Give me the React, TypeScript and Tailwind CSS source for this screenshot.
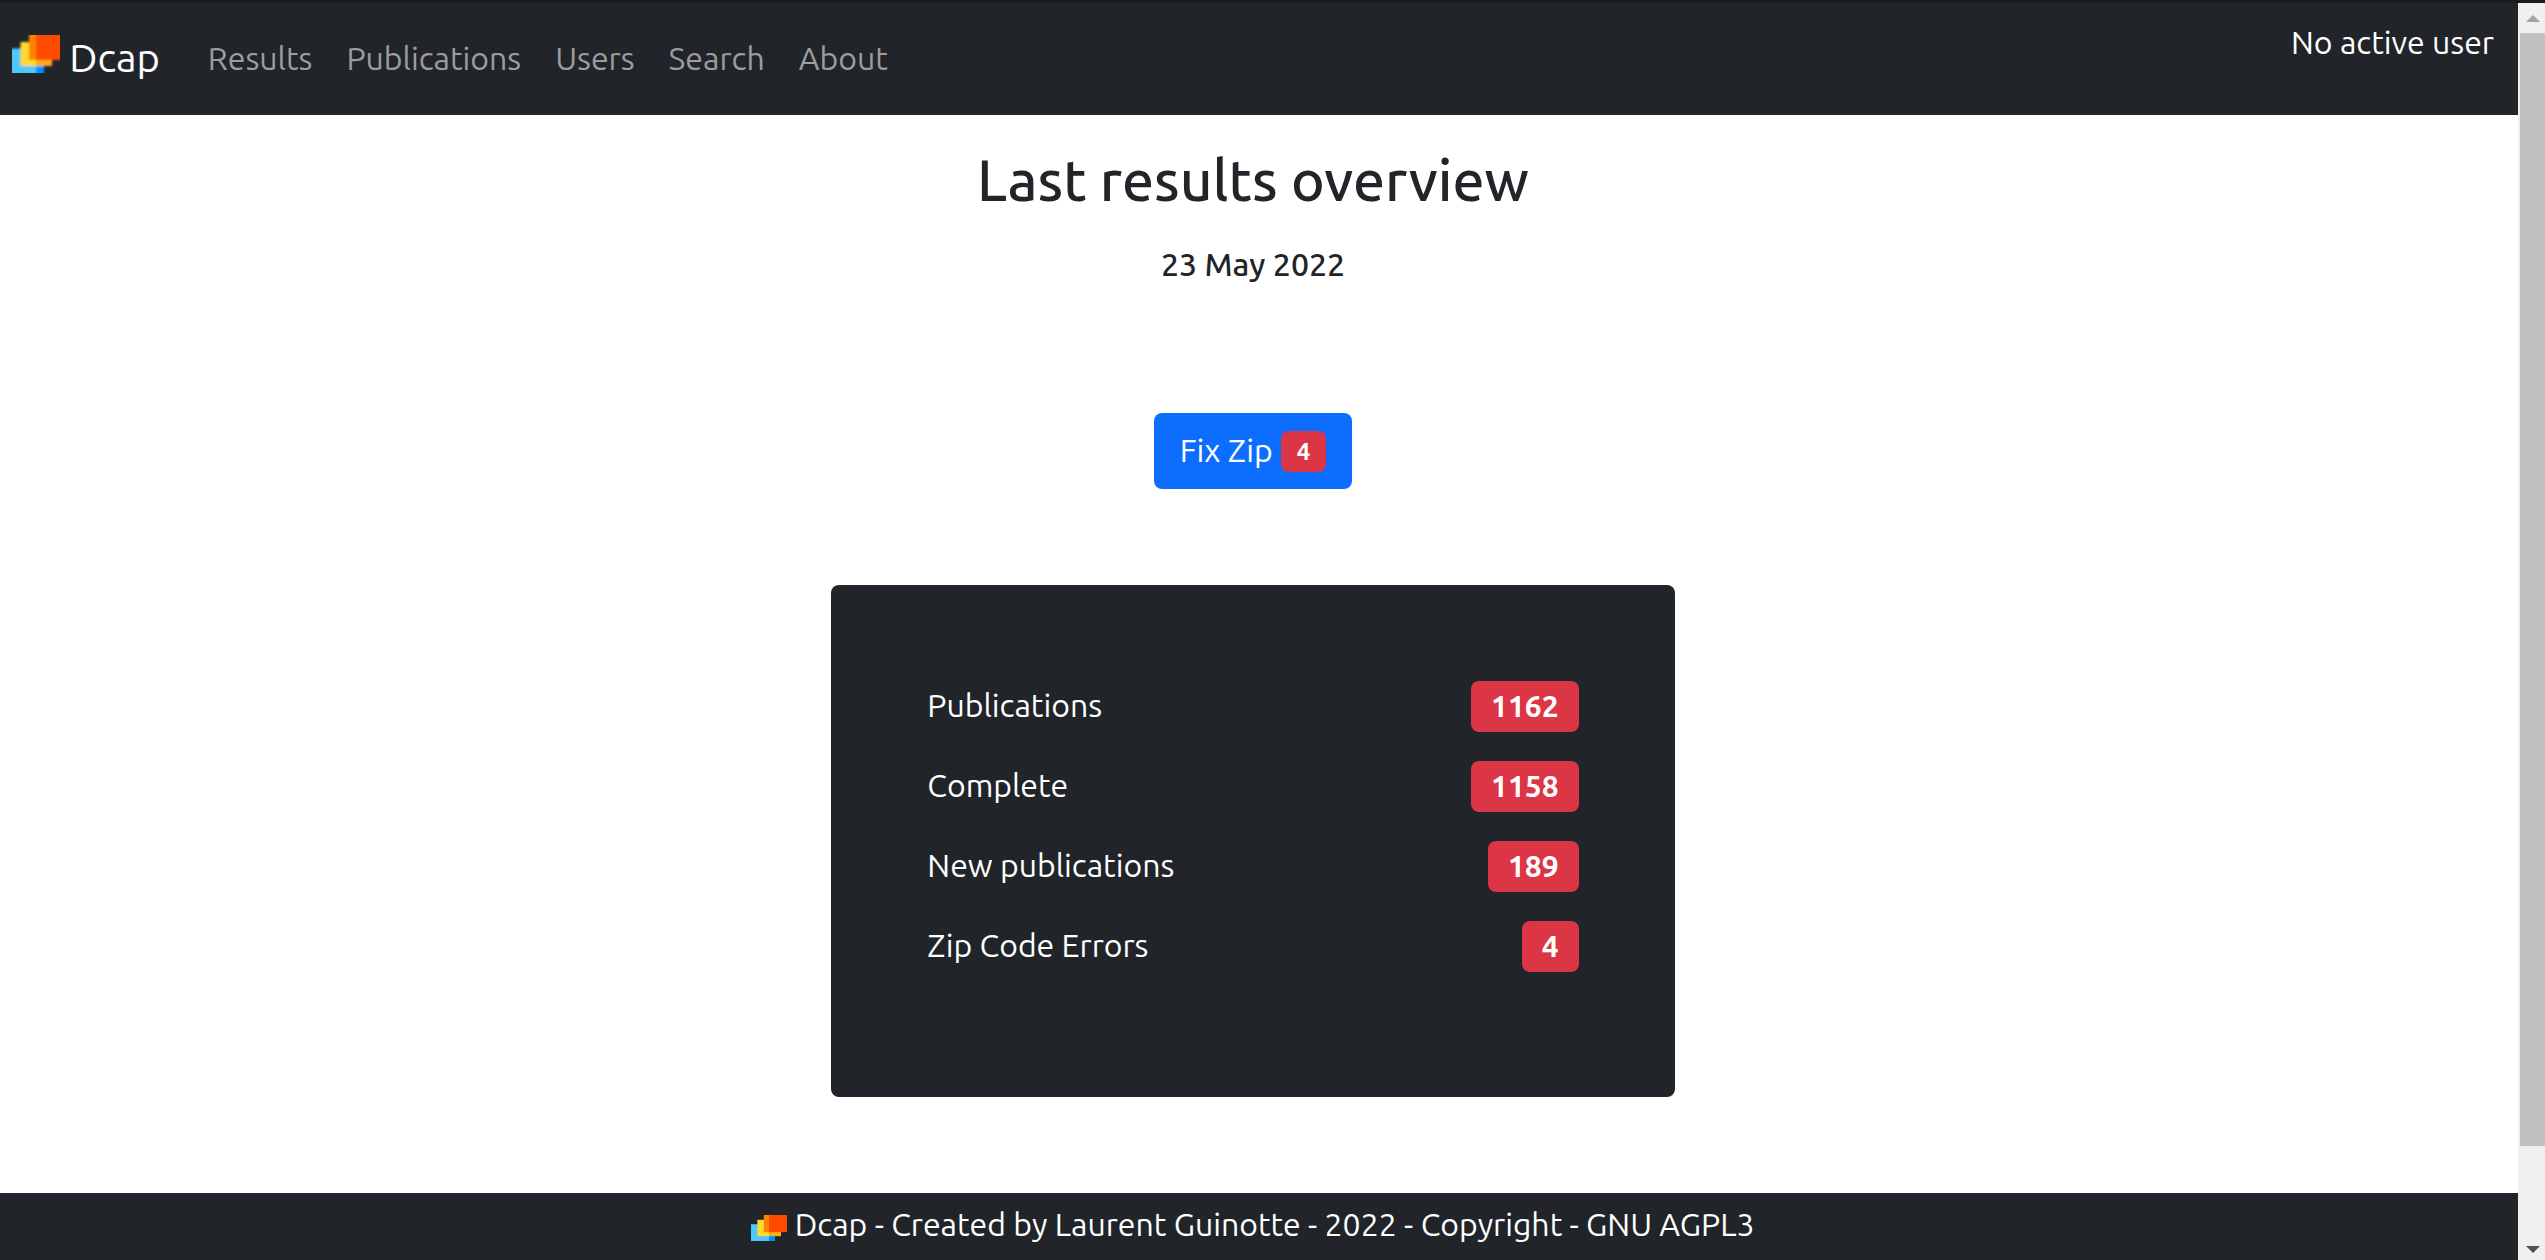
import { useId } from 'react';

const NAV = ['Results', 'Publications', 'Users', 'Search', 'About'];

const STATS = [
  { label: 'Publications', value: 1162 },
  { label: 'Complete', value: 1158 },
  { label: 'New publications', value: 189 },
  { label: 'Zip Code Errors', value: 4 },
];

function Logo({ className }: { className: string }) {
  const id = useId();
  return (
    <svg viewBox="0 0 48 38" preserveAspectRatio="none" className={className} aria-hidden="true">
      <filter id={id} x="-20%" y="-20%" width="140%" height="140%">
        <feGaussianBlur stdDeviation="0.9" />
      </filter>
      <g filter={`url(#${id})`}>
        <path d="M-8 13.5H24V46H-8Z" fill="#50c8ff" />
        <path d="M24 30H32V46H24Z" fill="#0090ff" />
        <path d="M8.5 7H24V31H8.5Z" fill="#ffd92e" />
        <path d="M24 24H40V31H24Z" fill="#ffaa1a" />
        <path d="M17 -8H24V25H17Z" fill="#ff8200" />
        <path d="M24 -8H56V25H24Z" fill="#ff4b00" />
      </g>
    </svg>
  );
}

function Header() {
  return (
    <header className="flex h-28 shrink-0 items-center bg-[#212529] px-3 pb-0.5 text-white">
      <a href="#home" className="mr-8 text-[40px] leading-[60px] whitespace-nowrap">
        <Logo className="inline-block h-[38px] w-12 align-text-top" /> Dcap
      </a>
      <nav className="flex gap-0.5">
        {NAV.map((item) => (
          <a key={item} href={`#${item.toLowerCase()}`} className="px-4 text-[#9b9d9e]">
            {item}
          </a>
        ))}
      </nav>
      <p className="mt-[15px] mr-3 ml-auto self-start">No active user</p>
    </header>
  );
}

function ScrollBar() {
  return (
    <div className="flex w-[27px] shrink-0 flex-col bg-[#f0f0f0]" aria-hidden="true">
      <svg viewBox="0 0 27 30" className="h-[30px] w-[27px]">
        <path d="M8 19L15 12L22 19Z" fill="#a3a3a3" />
      </svg>
      <div className="flex flex-1 flex-col pl-0.5">
        <div className="h-[93%] bg-[#c1c1c1]" />
      </div>
      <svg viewBox="0 0 27 30" className="h-[30px] w-[27px]">
        <path d="M8 16L15 23L22 16Z" fill="#505050" />
      </svg>
    </div>
  );
}

export default function App() {
  return (
    <div className="flex h-screen flex-col overflow-hidden border-t-[3px] border-[#1b1b1b] bg-white font-['Ubuntu','Noto_Sans',sans-serif] text-[32px] leading-[48px] text-[#212529]">
      <div className="flex min-h-0 flex-1">
        <div className="flex min-w-0 flex-1 flex-col overflow-hidden">
          <Header />
          <main className="-ml-3 flex flex-1 flex-col items-center pt-8">
            <h1 className="text-[57px] leading-[67px] font-medium">Last results overview</h1>
            <h2 className="mt-[26px] font-medium">23 May 2022</h2>
            <button
              type="button"
              className="mt-[125px] flex h-[76px] items-center gap-2 rounded-lg bg-[#0d6efd] px-[26px] pb-0.5 text-white"
            >
              Fix Zip
              <span className="mt-0.5 rounded-lg bg-[#dc3545] px-4 text-2xl leading-[41px] font-bold">4</span>
            </button>
            <dl className="mt-24 w-1/3 rounded-lg bg-[#212529] p-24 text-white">
              {STATS.map(({ label, value }) => (
                <div key={label} className="flex h-20 items-start justify-between">
                  <dt>{label}</dt>
                  <dd className="rounded-lg bg-[#dc3545] px-5 text-[30px] leading-[51px] font-bold">{value}</dd>
                </div>
              ))}
            </dl>
          </main>
          <footer className="h-[67px] shrink-0 bg-[#212529] pt-[7px] text-white">
            <p className="-ml-3 text-center">
              <Logo className="inline-block h-[26px] w-9 align-middle" /> Dcap - Created by Laurent Guinotte - 2022 -
              Copyright - GNU AGPL3
            </p>
          </footer>
        </div>
        <ScrollBar />
      </div>
    </div>
  );
}
